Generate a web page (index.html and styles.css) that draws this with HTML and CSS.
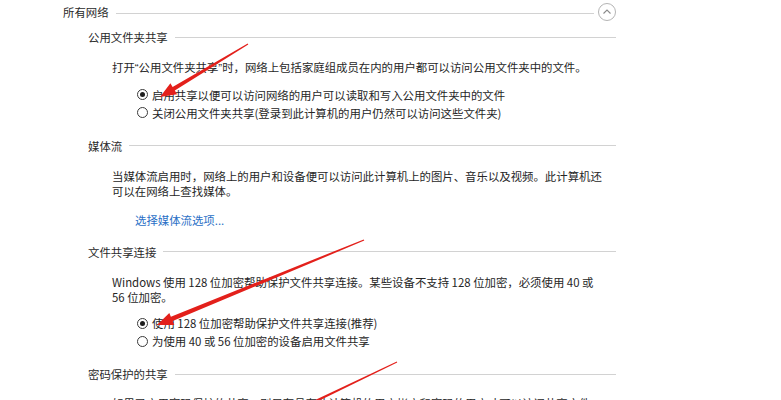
FILE: index.html
```html
<!DOCTYPE html>
<html lang="zh-CN">
<head>
<meta charset="utf-8">
<title>高级共享设置</title>
<link rel="stylesheet" href="styles.css">
</head>
<body>
<div class="page">
  <div class="top-row">
    <span class="h">所有网络</span>
    <span class="rule rule-top"></span>
    <span class="collapse">
      <svg width="18" height="18" viewBox="0 0 18 18"><circle cx="9" cy="9" r="8.5" fill="none" stroke="#b4b4b4" stroke-width="1"/><polyline points="5.5,10.5 9,7 12.5,10.5" fill="none" stroke="#8a8a8a" stroke-width="1.1"/></svg>
    </span>
  </div>

  <section class="sec first">
    <div class="sec-head"><span class="h">公用文件夹共享</span><span class="rule"></span></div>
    <p class="desc">打开<span class="q">“</span>公用文件夹共享<span class="q">”</span>时，网络上包括家庭组成员在内的用户都可以访问公用文件夹中的文件。</p>
    <div class="radios">
      <label class="radio"><span class="dot checked"></span><span>启用共享以便可以访问网络的用户可以读取和写入公用文件夹中的文件</span></label>
      <label class="radio"><span class="dot"></span><span>关闭公用文件夹共享(登录到此计算机的用户仍然可以访问这些文件夹)</span></label>
    </div>
  </section>

  <section class="sec">
    <div class="sec-head"><span class="h">媒体流</span><span class="rule"></span></div>
    <p class="desc">当媒体流启用时，网络上的用户和设备便可以访问此计算机上的图片、音乐以及视频。此计算机还<br>可以在网络上查找媒体。</p>
    <a class="link" href="#">选择媒体流选项...</a>
  </section>

  <section class="sec">
    <div class="sec-head"><span class="h">文件共享连接</span><span class="rule"></span></div>
    <p class="desc">Windows 使用 128 位加密帮助保护文件共享连接。某些设备不支持 128 位加密，必须使用 40 或<br>56 位加密。</p>
    <div class="radios">
      <label class="radio"><span class="dot checked"></span><span>使用 128 位加密帮助保护文件共享连接(推荐)</span></label>
      <label class="radio"><span class="dot"></span><span>为使用 40 或 56 位加密的设备启用文件共享</span></label>
    </div>
  </section>

  <section class="sec">
    <div class="sec-head"><span class="h">密码保护的共享</span><span class="rule"></span></div>
    <p class="desc last">如果已启用密码保护的共享，则只有具有此计算机的用户帐户和密码的用户才可以访问共享文件、</p>
  </section>

  <svg class="arrows" width="781" height="400" viewBox="0 0 781 400">
    <polygon fill="#e3201b" points="247.7,43.5 172.6,86.9 170.4,83.2 160,97 177.1,94.3 174.8,90.6 248.3,44.5"/>
    <polygon fill="#e3201b" points="363.7,239.4 170.9,316.7 169.3,312.9 157,325 174.3,324.9 172.7,321.1 364.3,240.6"/>
    <polygon fill="#e3201b" points="396.8,361.6 297.3,408.4 298.5,410.8 397.2,362.4"/>
  </svg>
</div>
</body>
</html>
```

FILE: styles.css
```css
html, body {
  margin: 0;
  padding: 0;
  background: #ffffff;
}

body {
  font-family: "Noto Sans CJK SC", "Noto Sans", sans-serif;
  font-size: 11.4px;
  color: #262626;
}

.page {
  position: relative;
  width: 781px;
  height: 400px;
  overflow: hidden;
  padding-top: 3px;
  box-sizing: border-box;
}

.top-row {
  display: flex;
  align-items: center;
  height: 18px;
  margin-left: 63px;
  width: 553px;
}

.h {
  line-height: 16px;
  white-space: nowrap;
  color: #2a2a2a;
}

.rule {
  flex: 1;
  height: 0;
  border-top: 1px solid #d2d2d2;
  margin-left: 7px;
}

.rule-top {
  margin-top: 3px;
  margin-right: 4px;
}

.collapse {
  display: flex;
  width: 18px;
  height: 18px;
}

.sec {
  margin-left: 88px;
  width: 528px;
  display: flex;
  flex-direction: column;
  align-items: flex-start;
}

.sec-head {
  display: flex;
  align-items: center;
  height: 16px;
  width: 100%;
  margin-top: 16px;
}

.sec.first .sec-head {
  margin-top: 8px;
}

.desc {
  margin: 15px 0 0 24px;
  line-height: 15px;
  white-space: nowrap;
}

.desc.last {
  margin-top: 14px;
}

.q {
  font-family: "Liberation Sans", sans-serif;
}

.radios {
  margin: 9.5px 0 0 49px;
  display: flex;
  flex-direction: column;
}

.radio {
  display: flex;
  align-items: center;
  height: 18px;
  line-height: 18px;
  white-space: nowrap;
}

.dot {
  width: 9px;
  height: 9px;
  border: 1px solid #3a3a3a;
  border-radius: 50%;
  margin-right: 4px;
  display: flex;
  align-items: center;
  justify-content: center;
  flex: none;
}

.dot.checked::after {
  content: "";
  width: 5px;
  height: 5px;
  border-radius: 50%;
  background: #1e1e1e;
}

.link {
  margin: 14px 0 0 47px;
  line-height: 15px;
  color: #2a6fc6;
  text-decoration: none;
  white-space: nowrap;
}

.arrows {
  position: absolute;
  left: 0;
  top: 0;
  pointer-events: none;
}
```
